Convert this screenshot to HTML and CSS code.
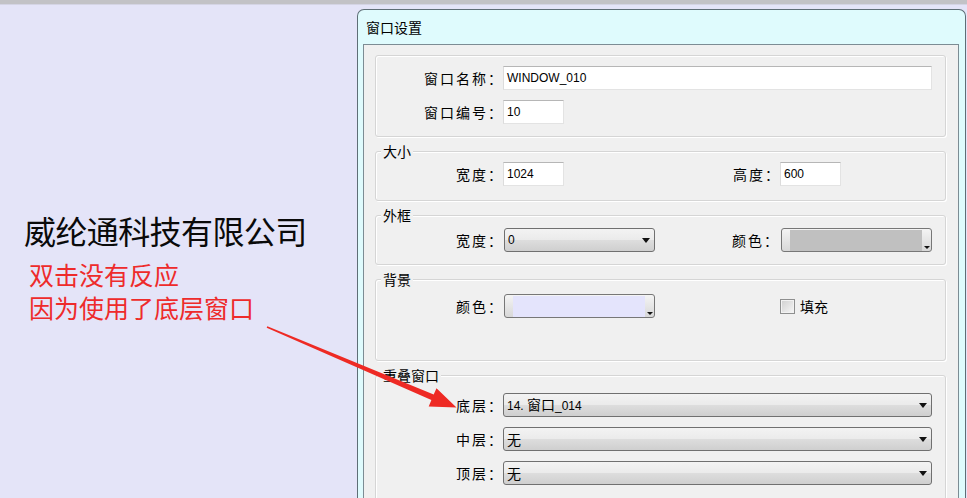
FILE: index.html
```html
<!DOCTYPE html>
<html lang="zh-CN">
<head>
<meta charset="utf-8">
<title>窗口设置</title>
<link rel="stylesheet" href="styles.css">
</head>
<body>
<div class="topbar"></div>
<div class="main">
  <section class="note">
    <h1 class="company">威纶通科技有限公司</h1>
    <p class="remark">双击没有反应<br>因为使用了底层窗口</p>
  </section>
  <div class="window">
    <div class="titlebar">窗口设置</div>
    <div class="client">
      <div class="group plain">
        <div class="row"><span class="lbl">窗口名称：</span><div class="input wide">WINDOW_010</div></div>
        <div class="row"><span class="lbl">窗口编号：</span><div class="input short">10</div></div>
      </div>
      <fieldset class="group g-size">
        <legend>大小</legend>
        <div class="row"><span class="lbl">宽度：</span><div class="input short">1024</div><span class="lbl lbl2">高度：</span><div class="input short">600</div></div>
      </fieldset>
      <fieldset class="group g-frame">
        <legend>外框</legend>
        <div class="row"><span class="lbl">宽度：</span><div class="combo small"><span class="ctext">0</span><span class="caret"></span></div><span class="lbl lbl3">颜色：</span><div class="ccombo right"><span class="swatch gray"></span><span class="ctail"><span class="mini"></span></span></div></div>
      </fieldset>
      <fieldset class="group g-bg">
        <legend>背景</legend>
        <div class="row"><span class="lbl">颜色：</span><div class="ccombo left"><span class="swatch lav"></span><span class="ctail"><span class="mini"></span></span></div><span class="check"></span><span class="checktext">填充</span></div>
      </fieldset>
      <fieldset class="group g-layer">
        <legend>重叠窗口</legend>
        <div class="row"><span class="lbl">底层：</span><div class="combo big"><span class="ctext">14. <span class="cj">窗口</span>_014</span><span class="caret"></span></div></div>
        <div class="row"><span class="lbl">中层：</span><div class="combo big"><span class="ctext cj">无</span><span class="caret"></span></div></div>
        <div class="row"><span class="lbl">顶层：</span><div class="combo big"><span class="ctext cj">无</span><span class="caret"></span></div></div>
      </fieldset>
    </div>
  </div>
</div>
<svg class="pointer" width="967" height="498" viewBox="0 0 967 498" aria-hidden="true">
  <polygon points="267.3,326.3 433.7,394.6 436.5,388.2 456.5,407.5 428.7,406.6 431.4,400.1 266.7,327.7" fill="#ee2a24"/>
</svg>
</body>
</html>
```
FILE: styles.css
```css
html, body {
  margin: 0;
  padding: 0;
}
body {
  width: 967px;
  height: 498px;
  overflow: hidden;
  position: relative;
  background: #e4e4f8;
  font-family: "Noto Sans CJK SC", sans-serif;
  color: #000;
}
.topbar {
  height: 4px;
  background: #c2c2c6;
  border-bottom: 1px solid #d4d4e4;
}
.main {
  display: flex;
  align-items: flex-start;
}
.note {
  width: 357px;
  flex: none;
  padding-top: 205px;
}
.company {
  margin: 0 0 0 24px;
  font-size: 32px;
  line-height: 40px;
  font-weight: 400;
  letter-spacing: -0.6px;
  color: #0a0a0a;
}
.remark {
  margin: 8px 0 0 29px;
  font-size: 25px;
  line-height: 33px;
  color: #ee2b2b;
}
.window {
  margin-top: 4px;
  width: 609px;
  height: 520px;
  box-sizing: border-box;
  border: 1px solid #5e6e76;
  border-bottom: none;
  border-radius: 7px 7px 0 0;
  background: #dffbfd;
  padding: 0 6px 0 5px;
  display: flex;
  flex-direction: column;
}
.titlebar {
  height: 34px;
  line-height: 34px;
  padding-left: 3px;
  font-size: 14px;
  flex: none;
}
.client {
  flex: 1;
  background: #f0f0f0;
  border: 1px solid #7c8c94;
  border-bottom: none;
  padding: 10px 12px 0 11px;
}
.group {
  margin: 0;
  min-width: 0;
  border: 1px solid #d5d5d5;
  border-radius: 3px;
  box-shadow: inset 1px 1px 0 #fff, 1px 1px 0 #fff;
}
.group.plain {
  padding: 10px 12px 12px 0;
}
fieldset.group {
  margin-top: 6px;
}
legend {
  font-size: 14px;
  line-height: 16px;
  padding: 0 2px;
  margin-left: 5px;
  background: #f0f0f0;
}
.g-size { padding: 3px 12px 14px 0; }
.g-frame { padding: 5px 12px 12px 0; }
.g-bg { padding: 7px 12px 42px 0; }
.g-layer { padding: 10px 12px 20px 0; }
.row {
  display: flex;
  align-items: center;
  height: 24px;
}
.row + .row {
  margin-top: 10px;
}
.lbl {
  width: 128px;
  flex: none;
  text-align: right;
  font-size: 14px;
  line-height: 16px;
  letter-spacing: 2px;
}
.lbl2 { width: 217px; }
.lbl3 { width: 125px; }
.input {
  height: 24px;
  box-sizing: border-box;
  margin-left: -1px;
  background: #fff;
  border: 1px solid #e3e3e3;
  border-top-color: #b6b6b6;
  border-left-color: #dcdcdc;
  font-family: "Liberation Sans", sans-serif;
  font-size: 12px;
  line-height: 22px;
  padding-left: 3px;
  flex: none;
}
.input.wide { width: 429px; }
.input.short { width: 61px; }
.combo {
  height: 24px;
  box-sizing: border-box;
  border: 1px solid #707070;
  border-radius: 3px;
  background: linear-gradient(#f3f3f3 0%, #ebebeb 48%, #dddddd 52%, #cfcfcf 100%);
  display: flex;
  align-items: center;
  padding: 0 4px 0 3px;
  flex: none;
  font-family: "Liberation Sans", "Noto Sans CJK SC", sans-serif;
  font-size: 12px;
}
.combo.small { width: 151px; margin-left: 0; }
.combo.big { width: 429px; margin-left: -1px; }
.ctext { line-height: 16px; }
.cj {
  font-family: "Noto Sans CJK SC", sans-serif;
  font-size: 14px;
}
.caret {
  margin-left: auto;
  width: 0;
  height: 0;
  border-left: 4.5px solid transparent;
  border-right: 4.5px solid transparent;
  border-top: 5px solid #111;
}
.ccombo {
  width: 151px;
  height: 24px;
  box-sizing: border-box;
  border: 1px solid #777;
  border-radius: 3px;
  background: linear-gradient(#f4f4f4, #d8d8d8);
  display: flex;
  align-items: stretch;
  padding: 1px 0 0 0;
  flex: none;
}
.ccombo.left { margin-left: 0; }
.ccombo.right { margin-left: 1px; }
.swatch {
  flex: 1;
  margin-left: 8px;
}
.swatch.gray { background: #c0c0c0; }
.swatch.lav { background: #e4e4fc; }
.ctail {
  width: 9px;
  display: flex;
  align-items: flex-end;
  justify-content: center;
  padding-bottom: 2px;
}
.mini {
  width: 0;
  height: 0;
  border-left: 3px solid transparent;
  border-right: 3px solid transparent;
  border-top: 3px solid #111;
}
.check {
  margin-left: 125px;
  width: 15px;
  height: 15px;
  box-sizing: border-box;
  border: 1px solid #8e8f8f;
  background: linear-gradient(135deg, #cfcfcf, #f7f7f7);
  box-shadow: inset 0 0 0 1px #f2f2f2;
  flex: none;
}
.checktext {
  margin-left: 5px;
  font-size: 14px;
  line-height: 16px;
}
.pointer {
  position: absolute;
  left: 0;
  top: 0;
  pointer-events: none;
}
```
